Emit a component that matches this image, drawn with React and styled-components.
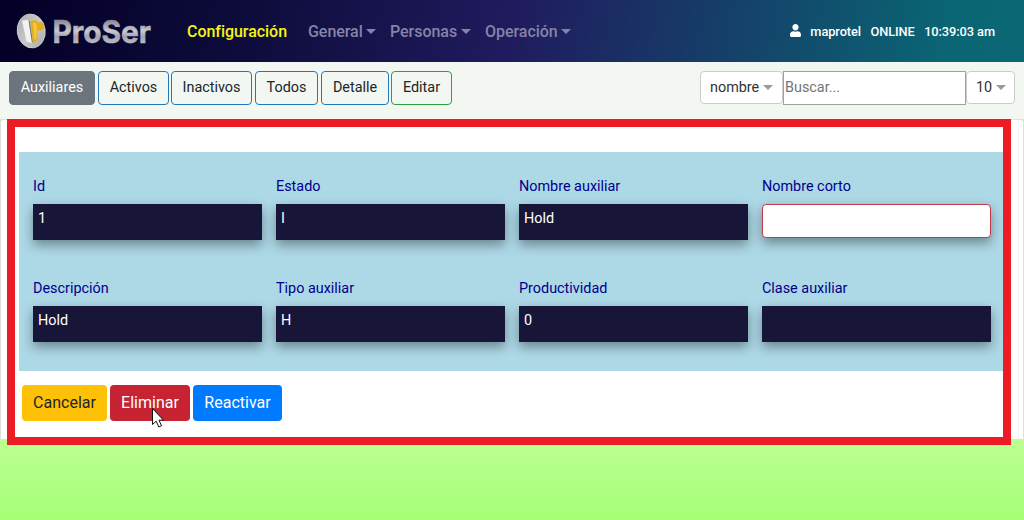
import React from 'react';
import styled, { createGlobalStyle } from 'styled-components';

const GlobalStyle = createGlobalStyle`
  *, *::before, *::after { box-sizing: border-box; }
  body {
    margin: 0;
    height: 520px;
    overflow: hidden;
    font-family: Roboto, "Liberation Sans", sans-serif;
    font-size: 16px;
    line-height: 24px;
    color: #212529;
    background: #b4ff8c;
  }
  button, input { font-family: inherit; }
`;

const Page = styled.div`
  position: relative;
  width: 1024px;
  height: 520px;
  overflow: hidden;
  background: linear-gradient(#beff96 430px, #a7ff76 520px);
`;

const Header = styled.header`
  display: flex;
  align-items: center;
  height: 62px;
  padding: 0 29px 0 16px;
  background: linear-gradient(100deg, #030027 0%, #0d0b3a 23%, #201b5e 50%, #0a6574 92%, #0a6873 100%);
`;

const Logo = styled.svg`
  width: 140px;
  height: 42px;
  flex: none;
  margin-right: 31px;
  overflow: visible;
`;

const Nav = styled.nav`
  display: flex;
  flex: 1;
  padding-top: 2px;
`;

const NavItem = styled.a`
  display: flex;
  align-items: center;
  width: ${(p) => p.$width}px;
  font-weight: 500;
  letter-spacing: -0.04px;
  white-space: nowrap;
  color: ${(p) => (p.$active ? '#f5f516' : '#8583a8')};
`;

const Caret = styled.span`
  flex: none;
  width: 0;
  height: 0;
  margin-left: ${(p) => p.$gap || 3.5}px;
  margin-bottom: 2px;
  border: solid transparent;
  border-width: 5px 5px 0;
  border-top-color: currentColor;
  color: ${(p) => p.$color || 'inherit'};
`;

const Status = styled.div`
  display: flex;
  align-items: center;
  gap: 9.4px;
  padding-top: 2px;
  font-size: 12.8px;
  font-weight: 500;
  letter-spacing: -0.07px;
  color: #fff;
  white-space: nowrap;
  svg { display: block; margin-bottom: 3px; }
`;

const Toolbar = styled.div`
  display: flex;
  justify-content: space-between;
  align-items: flex-start;
  height: 57px;
  padding: 9px 9px 0;
  background: #f2f8f1;
`;

const Tabs = styled.div`
  display: flex;
`;

const Tab = styled.button`
  width: ${(p) => p.$width}px;
  height: 34px;
  margin: 0 ${(p) => p.$gap}px 0 0;
  padding: 0 0 2px;
  border: 1px solid ${(p) => p.$border};
  border-radius: 4px;
  background: ${(p) => (p.$filled ? '#6c757d' : 'transparent')};
  color: ${(p) => (p.$filled ? '#fff' : '#212529')};
  font-size: 14.4px;
`;

const Filters = styled.div`
  display: flex;
`;

const Select = styled.div`
  display: flex;
  align-items: center;
  justify-content: space-between;
  width: ${(p) => p.$width}px;
  height: 33px;
  padding: 0 9px;
  border: 1px solid #ccc;
  border-radius: 4px;
  background: #fff;
  color: #333;
  font-size: 14.4px;
  ${Caret} { margin-bottom: 0; }
`;

const Search = styled.input`
  width: 183px;
  height: 34px;
  padding: 0 1px 1px;
  border: 1px solid #a0a09c;
  border-radius: 0;
  background: #fff;
  font-size: 14.4px;
  &::placeholder { color: #757575; opacity: 1; }
`;

const Card = styled.main`
  width: 1024px;
  height: 320px;
  padding: 32px 20px 0 18px;
  border: 1px solid #dfdfdf;
  border-bottom: 0;
  border-radius: 4px 4px 0 0;
  background: linear-gradient(#f4f4f4, #f4f4f4) 1017px 0 / 1px 100% no-repeat #fff;
`;

const FieldGrid = styled.section`
  display: grid;
  grid-template-columns: repeat(4, 229px);
  grid-auto-rows: 102px;
  column-gap: 14px;
  width: 985px;
  height: 219px;
  padding: 22px 14px 0;
  background: #add8e6;
`;

const Label = styled.label`
  display: block;
  height: 30px;
  padding-top: 1px;
  font-size: 14.4px;
  color: #00008b;
`;

const Value = styled.div`
  height: ${(p) => (p.$invalid ? 34 : 36)}px;
  padding: 3px 5px;
  border: ${(p) => (p.$invalid ? '1px solid #c13b4b' : '0')};
  border-radius: ${(p) => (p.$invalid ? 4 : 0)}px;
  background: ${(p) => (p.$invalid ? '#fff' : '#171538')};
  box-shadow: 0 5px 12px rgba(0, 0, 0, 0.38);
  color: #fff;
  font-size: 14.4px;
`;

const Actions = styled.div`
  display: flex;
  gap: 3px;
  padding: 14px 3px 0;
`;

const Action = styled.button`
  width: ${(p) => p.$width}px;
  height: 36px;
  padding: 0 0 1px;
  border: 0;
  border-radius: 4px;
  background: ${(p) => p.$bg};
  color: ${(p) => p.$color || '#fff'};
  font-size: 16px;
`;

const Highlight = styled.div`
  position: absolute;
  left: 7px;
  top: 119px;
  width: 1004px;
  height: 326px;
  border: 8px solid #ed1c24;
  pointer-events: none;
`;

const Pointer = styled.svg`
  position: absolute;
  left: 151px;
  top: 407px;
`;

const menus = [
  { name: 'General', width: 82 },
  { name: 'Personas', width: 95 },
  { name: 'Operación', width: 90 },
];

const tabs = [
  { name: 'Auxiliares', width: 86, gap: 3, border: '#6c757d', filled: true },
  { name: 'Activos', width: 71, gap: 2, border: '#2079bd' },
  { name: 'Inactivos', width: 81, gap: 3, border: '#2079bd' },
  { name: 'Todos', width: 63, gap: 3, border: '#2079bd' },
  { name: 'Detalle', width: 68, gap: 2, border: '#2079bd' },
  { name: 'Editar', width: 61, gap: 0, border: '#2f9e44' },
];

const fields = [
  { label: 'Id', value: '1' },
  { label: 'Estado', value: 'I' },
  { label: 'Nombre auxiliar', value: 'Hold' },
  { label: 'Nombre corto', value: '', invalid: true },
  { label: 'Descripción', value: 'Hold' },
  { label: 'Tipo auxiliar', value: 'H' },
  { label: 'Productividad', value: '0' },
  { label: 'Clase auxiliar', value: '' },
];

function Brand() {
  return (
    <Logo viewBox="0 0 140 42">
      <defs>
        <linearGradient id="silver" x1="0" y1="0" x2="0" y2="1">
          <stop offset="0.15" stopColor="#77778a" />
          <stop offset="0.5" stopColor="#c8c8d0" />
          <stop offset="0.65" stopColor="#a4a4b2" />
          <stop offset="0.85" stopColor="#c0c0ca" />
        </linearGradient>
        <linearGradient id="disc" x1="0" y1="0" x2="1" y2="1">
          <stop offset="0" stopColor="#a9a9a9" />
          <stop offset="0.5" stopColor="#c9c9c9" />
          <stop offset="1" stopColor="#aaa" />
        </linearGradient>
      </defs>
      <ellipse cx="15.2" cy="21" rx="14" ry="17" transform="rotate(-8 15.2 21)" fill="url(#disc)" stroke="#d6d6d6" strokeWidth="0.8" />
      <path d="M6 10.500 L12.500 10 L16 33 L10.500 31.500 Z" fill="#f2f2f2" />
      <path d="M12.500 10 L14 12 L16.800 31.500 L16 33 Z" fill="#77736a" />
      <path d="M14 11 L20 10 L22 12.500 L26 12 L28.500 17 L26 20.500 L21 20.500 L21.500 31 L16.800 33 L16 21 Z" fill="#e3ae20" />
      <path d="M17 13 L20 13 L21 17 L20 29 L18.500 30 Z" fill="#f4c936" />
      <text x="36.500" y="32.500" fontFamily="Inter, sans-serif" fontWeight="700" fontSize="31.500" textLength="98.500" lengthAdjust="spacingAndGlyphs" fill="url(#silver)" stroke="url(#silver)" strokeWidth="0.600">ProSer</text>
    </Logo>
  );
}

export default function App() {
  return (
    <>
      <GlobalStyle />
      <Page>
        <Header>
          <Brand />
          <Nav>
            <NavItem $active $width={121}>Configuración</NavItem>
            {menus.map((m) => (
              <NavItem key={m.name} $width={m.width}>
                {m.name}
                <Caret />
              </NavItem>
            ))}
          </Nav>
          <Status>
            <svg width="11" height="13" viewBox="0 0 448 512" preserveAspectRatio="none" fill="#fff">
              <path d="M224 256c70.700 0 128-57.300 128-128S294.700 0 224 0 96 57.300 96 128s57.300 128 128 128zm89.600 32h-16.700c-22.200 10.200-46.900 16-72.900 16s-50.600-5.800-72.900-16h-16.700C60.200 288 0 348.200 0 422.400V464c0 26.500 21.500 48 48 48h352c26.500 0 48-21.500 48-48v-41.600c0-74.200-60.200-134.400-134.400-134.400z" />
            </svg>
            <span>maprotel</span>
            <span>ONLINE</span>
            <span>10:39:03 am</span>
          </Status>
        </Header>
        <Toolbar>
          <Tabs>
            {tabs.map((t) => (
              <Tab key={t.name} $width={t.width} $gap={t.gap} $border={t.border} $filled={t.filled}>
                {t.name}
              </Tab>
            ))}
          </Tabs>
          <Filters>
            <Select $width={83}>
              nombre
              <Caret $color="#999" />
            </Select>
            <Search placeholder="Buscar..." />
            <Select $width={49}>
              10
              <Caret $color="#999" />
            </Select>
          </Filters>
        </Toolbar>
        <Card>
          <FieldGrid>
            {fields.map((f) => (
              <div key={f.label}>
                <Label>{f.label}</Label>
                <Value $invalid={f.invalid}>{f.value}</Value>
              </div>
            ))}
          </FieldGrid>
          <Actions>
            <Action $width={85} $bg="#ffc107" $color="#212529">Cancelar</Action>
            <Action $width={80} $bg="#c82333">Eliminar</Action>
            <Action $width={89} $bg="#007bff">Reactivar</Action>
          </Actions>
        </Card>
        <Highlight />
        <Pointer width="14" height="22" viewBox="0 0 14 22">
          <path d="M1.500 1.500 V17.500 L5.200 14.200 L7.800 20 L10.500 18.800 L8 13.200 H12.500 Z" fill="#fff" stroke="#111" strokeWidth="1" />
        </Pointer>
      </Page>
    </>
  );
}
